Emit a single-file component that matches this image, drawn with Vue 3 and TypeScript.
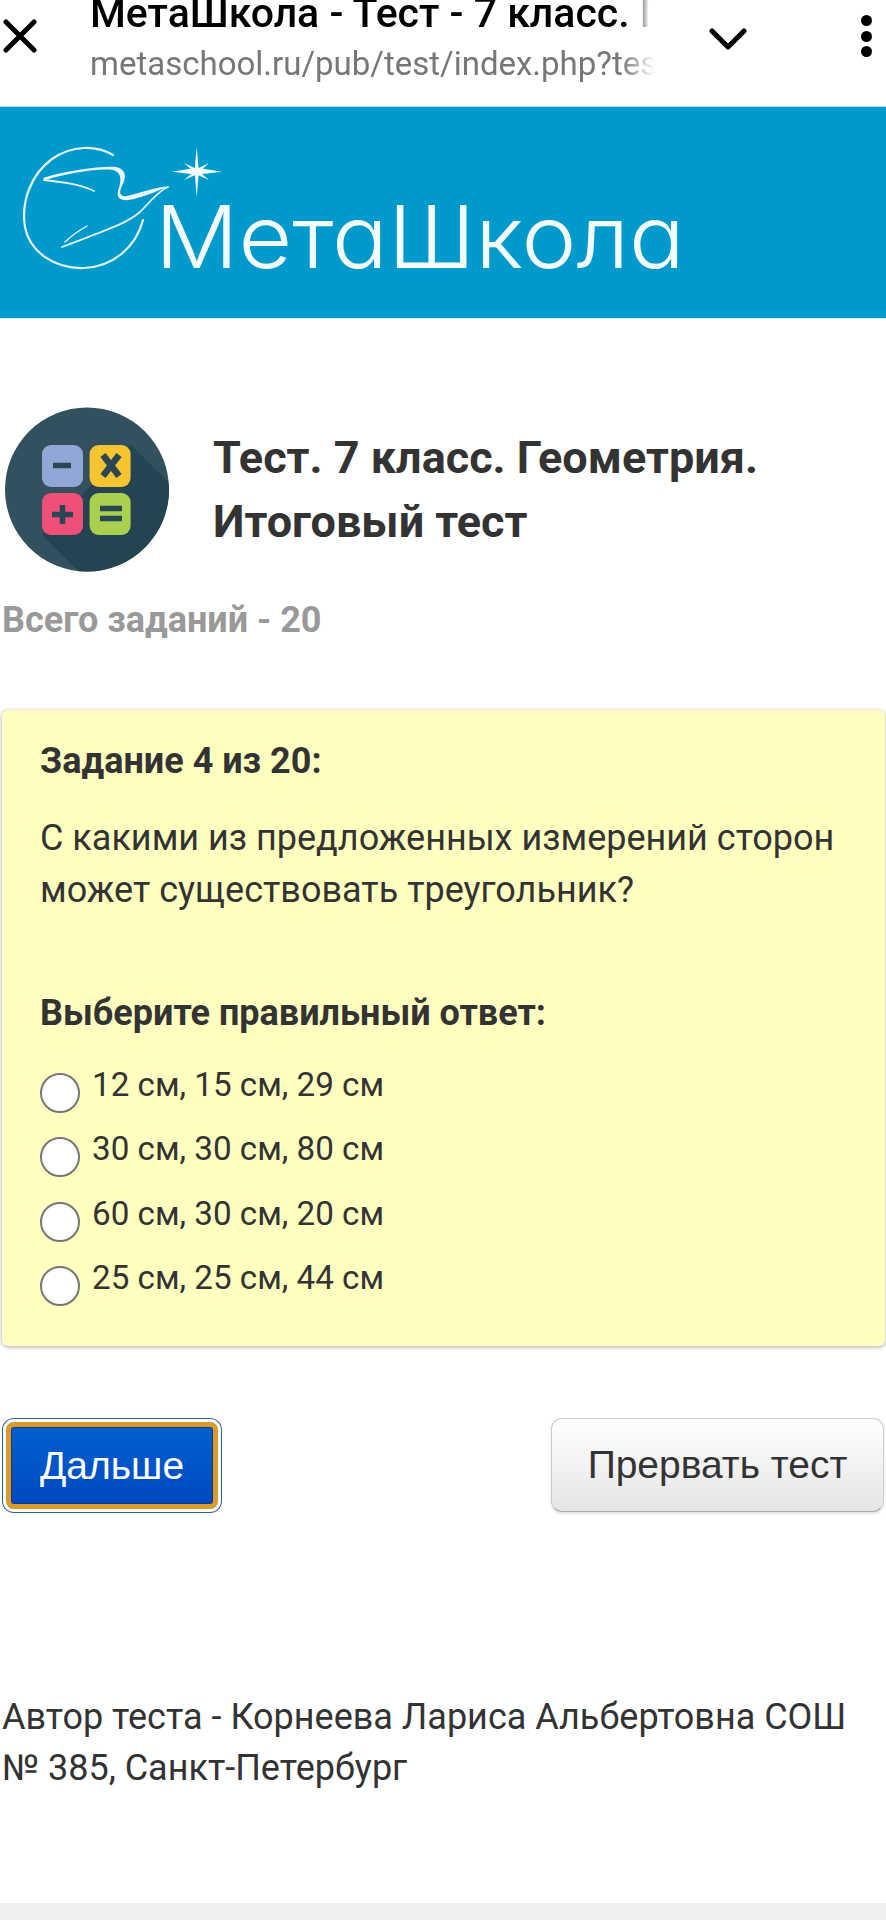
<script setup lang="ts">
const options: string[] = [
  '12 см, 15 см, 29 см',
  '30 см, 30 см, 80 см',
  '60 см, 30 см, 20 см',
  '25 см, 25 см, 44 см',
]
</script>

<template>
  <div class="page">
    <header class="topbar">
      <svg class="close" width="34" height="34" viewBox="0 0 34 34" aria-hidden="true">
        <path d="M3 3 L31 31 M31 3 L3 31" stroke="#000" stroke-width="5" stroke-linecap="round" fill="none" />
      </svg>
      <div class="addr">
        <div class="addr-title">МетаШкола - Тест - 7 класс. Геометрия</div>
        <div class="addr-url">metaschool.ru/pub/test/index.php?test=1234</div>
      </div>
      <svg class="chev" width="38" height="22" viewBox="0 0 38 22" aria-hidden="true">
        <path d="M3 3 L19 19 L35 3" stroke="#000" stroke-width="5" stroke-linecap="round" stroke-linejoin="round" fill="none" />
      </svg>
      <div class="dots"><i></i><i></i><i></i></div>
    </header>

    <div class="banner">
      <svg width="886" height="211" viewBox="0 0 886 211" role="img" aria-label="МетаШкола">
        <g fill="none" stroke="#e4f6fc" stroke-linecap="round">
          <path d="M113 48 C96 38 72 38 52 52 C30 68 21 96 25 120 C30 146 56 162 84 161 C113 160 136 140 143 113" stroke-width="2.200" />
          <path d="M94 84 C80 77 62 75 44 73" stroke-width="1.800" />
          <path d="M65 135 C72 128 80 123 87 119" stroke-width="1.400" />
          <path d="M168 80 C158 84 150 95 140 105 C125 118 100 125 62 140" stroke-width="1.800" />
        </g>
        <path fill="#eafaff" d="M43 71 C70 63 100 59 116 60 C126 62 127 70 122 79 C118 87 121 90 127 89 C140 86 152 81 169 79 C158 84 148 88 134 92 C122 95 116 92 118 84 C121 75 123 66 113 63 C98 61 70 66 45 73 Z" />
        <path fill="#f2fbfe" d="M196.700 40 L198.600 61 L222 64.700 L198.600 67.500 L196.700 90 L194.800 67.500 L172 64.700 L194.800 61 Z" />
        <path fill="#f2fbfe" d="M184 56 L196.700 62 L209 56 L199.500 64.700 L209 73 L196.700 67.500 L184 73 L194 64.700 Z" />
        <text class="logo-text" x="155" y="161" textLength="530" lengthAdjust="spacingAndGlyphs">МетаШкола</text>
      </svg>
    </div>

    <section class="head">
      <svg class="calc" width="164" height="165" viewBox="0 0 164 165" aria-hidden="true">
        <defs>
          <clipPath id="calc-clip"><circle cx="82" cy="82.500" r="82" /></clipPath>
        </defs>
        <circle cx="82" cy="82.500" r="82" fill="#33505f" />
        <polygon clip-path="url(#calc-clip)" points="126,38 200,112 200,200 110,200 37,128" fill="#254350" />
        <rect x="37" y="38" width="41" height="42" rx="9" fill="#93a7d6" />
        <rect x="84.600" y="38" width="41" height="42" rx="9" fill="#f4c531" />
        <rect x="37" y="86" width="41" height="42" rx="9" fill="#ef5078" />
        <rect x="84.600" y="86" width="41" height="42" rx="9" fill="#a9d04e" />
        <g stroke="#2b4552" stroke-width="5.500" fill="none">
          <path d="M48 58.500 H66" />
          <path d="M98 48 L114 69 M114 48 L98 69" stroke-width="6.500" />
          <path d="M47 107.500 H68 M57.500 98 V117" />
          <path d="M95 101.500 H117 M95 111.500 H117" />
        </g>
      </svg>
      <h1 class="title">Тест. 7 класс. Геометрия.<br />Итоговый тест</h1>
    </section>

    <p class="total">Всего заданий - 20</p>

    <section class="card">
      <p class="task">Задание 4 из 20:</p>
      <p class="question">С какими из предложенных измерений сторон может существовать треугольник?</p>
      <p class="choose">Выберите правильный ответ:</p>
      <ul class="opts">
        <li v-for="o in options" :key="o" class="opt">
          <span class="radio"></span>
          <span class="opt-text">{{ o }}</span>
        </li>
      </ul>
    </section>

    <div class="actions">
      <button class="btn-next" type="button">Дальше</button>
      <button class="btn-stop" type="button">Прервать тест</button>
    </div>

    <p class="author">Автор теста - Корнеева Лариса Альбертовна СОШ № 385, Санкт-Петербург</p>

    <div class="foot"></div>
  </div>
</template>

<style scoped>
.page {
  width: 886px;
  height: 1920px;
  background: #fff;
  font-family: Roboto, "Liberation Sans", sans-serif;
  color: #333;
  display: flex;
  flex-direction: column;
  overflow: hidden;
}
.topbar {
  height: 107px;
  flex: none;
  display: flex;
  align-items: flex-start;
  position: relative;
}
.close { margin: 19px 0 0 3px; flex: none; }
.addr { width: 565px; margin-left: 53px; flex: none; overflow: hidden; height: 107px; }
.addr-title {
  margin-top: -6px;
  font-size: 41px;
  line-height: 38px;
  font-weight: 500;
  color: #000;
  white-space: nowrap;
  -webkit-mask-image: linear-gradient(to right, #000 96%, transparent 99%);
  mask-image: linear-gradient(to right, #000 96%, transparent 99%);
}
.addr-url {
  margin-top: 12px;
  font-size: 33px;
  line-height: 40px;
  color: #777;
  white-space: nowrap;
  -webkit-mask-image: linear-gradient(to right, #000 94%, transparent 100%);
  mask-image: linear-gradient(to right, #000 94%, transparent 100%);
}
.chev { margin: 28px 0 0 54px; flex: none; }
.dots {
  margin: 15px 0 0 114px;
  width: 11px;
  display: flex;
  flex-direction: column;
  gap: 4.500px;
  flex: none;
}
.dots i { display: block; width: 11px; height: 11px; border-radius: 50%; background: #000; }

.banner {
  height: 211px;
  flex: none;
  background: #0099cc;
  box-shadow: 0 -1px 0 #b5e2f0, 0 1px 0 #cfeef6;
}
.banner svg { display: block; }
.logo-text {
  font-family: Inter, "Noto Sans", sans-serif;
  font-size: 87px;
  font-weight: 300;
  font-feature-settings: "cv11";
  fill: #f2fbfe;
}

.head {
  display: flex;
  align-items: center;
  gap: 44px;
  margin-top: 89px;
  padding-left: 5px;
}
.calc { flex: none; display: block; }
.title {
  margin: 0;
  font-size: 45px;
  line-height: 64px;
  font-weight: 700;
  color: #333;
}
.total {
  margin: 28px 0 0 2px;
  font-size: 36px;
  line-height: 40px;
  font-weight: 700;
  color: #999;
}
.card {
  margin: 70px 1px 0 2px;
  height: 636px;
  box-sizing: border-box;
  padding: 31px 40px 0 38px;
  background: #ffffc0;
  border-radius: 6px;
  box-shadow: 0 1px 4px rgba(0, 0, 0, 0.35);
}
.card p { margin: 0; }
.task, .choose { font-size: 36px; line-height: 40px; font-weight: 700; }
.card .question { margin-top: 31px; font-size: 36px; line-height: 52px; }
.card .choose { margin-top: 77px; }
.opts { list-style: none; margin: 32px 0 0; padding: 0; }
.opt { display: flex; align-items: flex-start; height: 64.300px; }
.radio {
  flex: none;
  width: 40px;
  height: 40px;
  box-sizing: border-box;
  border: 2.500px solid #777;
  border-radius: 50%;
  background: #fff;
  margin: 8px 0 0 0;
}
.opt-text { margin-left: 12px; font-size: 33.200px; line-height: 40px; color: #333; }

.actions {
  display: flex;
  justify-content: space-between;
  align-items: flex-start;
  margin: 72px 2px 0 0;
}
.btn-next {
  width: 212px;
  height: 87px;
  margin: 4px 0 0 6px;
  box-sizing: border-box;
  background: linear-gradient(#0060d0, #0048c0);
  border: 5px solid #d99b2c;
  border-radius: 8px;
  box-shadow: inset 0 0 0 1px #0a3a86, 0 0 0 3px #fff, 0 0 0 4px #31609c;
  padding: 0;
  font-family: "Liberation Sans", Arial, sans-serif;
  font-size: 39px;
  color: #fff;
}
.btn-stop {
  width: 333px;
  height: 94px;
  box-sizing: border-box;
  background: linear-gradient(#ffffff, #e5e5e5);
  border: 1px solid #ccc;
  border-bottom-color: #aaa;
  border-radius: 11px;
  box-shadow: 0 2px 3px rgba(0, 0, 0, 0.12);
  padding: 0;
  font-family: "Liberation Sans", Arial, sans-serif;
  font-size: 39px;
  color: #333;
}
.author {
  margin: 180px 20px 0 2px;
  font-size: 36px;
  line-height: 51px;
  color: #333;
}
.foot {
  margin-top: auto;
  height: 17px;
  flex: none;
  background: #efefef;
}
</style>
